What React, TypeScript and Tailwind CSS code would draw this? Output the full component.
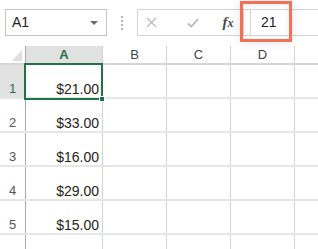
export default function App() {
  const rows = ["$21.00", "$33.00", "$16.00", "$29.00", "$15.00", ""];
  return (
    <div className="relative h-[249px] w-[318px] overflow-hidden bg-white font-['Liberation_Sans',Arial,sans-serif]">
      {/* formula bar */}
      <div className="flex h-[45px] items-start pt-[9px]">
        <div className="ml-[5px] flex h-[27px] w-[102px] shrink-0 items-center justify-between border border-[#c6c6c6] pl-[6px] pr-[8px]">
          <span className="text-[14px] text-[#222]">A1</span>
          <svg width="8" height="4" viewBox="0 0 8 4">
            <path d="M0 0h8L4 4z" fill="#6a6a6a" />
          </svg>
        </div>
        <div className="flex h-[27px] w-[30px] shrink-0 flex-col items-center justify-center gap-[2px]">
          <div className="h-[2px] w-[2px] bg-[#b5b5b5]" />
          <div className="h-[2px] w-[2px] bg-[#b5b5b5]" />
          <div className="h-[2px] w-[2px] bg-[#b5b5b5]" />
          <div className="h-[2px] w-[2px] bg-[#b5b5b5]" />
        </div>
        <div className="flex h-[27px] flex-1 items-center border-y border-l border-[#d4d4d4]">
          <div className="ml-[7px] flex w-[12px] justify-center">
            <svg width="11" height="11" viewBox="0 0 11 11">
              <path d="M1 1L10 10M10 1L1 10" stroke="#b9b9b9" strokeWidth="1.2" />
            </svg>
          </div>
          <div className="ml-[30px] flex w-[12px] justify-center">
            <svg width="12" height="10" viewBox="0 0 12 10">
              <path d="M1 5.5L4.3 8.5L11 1.2" stroke="#b9b9b9" strokeWidth="1.8" fill="none" />
            </svg>
          </div>
          <div className="ml-[21px] w-[16px] text-center font-['Liberation_Serif',serif] text-[15px] font-bold italic leading-none text-[#4a4a4a]">
            <span>f</span>
            <span className="text-[12px]">x</span>
          </div>
          <div className="ml-[7px] h-[25px] w-px bg-[#d4d4d4]" />
          <div className="ml-[6px] flex h-full flex-1 items-center border-l border-[#d4d4d4] pl-[10px] text-[14px] text-[#222]">
            21
          </div>
        </div>
      </div>

      {/* header row */}
      <div className="flex h-[20px] border-b-2 border-[#d6d6d6] pt-px text-[13px]">
        <div className="relative w-[26px] shrink-0 border-r border-[#ababab]">
          <svg className="absolute bottom-[2px] right-[3px]" width="10" height="11" viewBox="0 0 10 11">
            <path d="M10 0V11H0z" fill="#dedede" />
          </svg>
        </div>
        <div className="flex w-[77px] shrink-0 items-center justify-center border-r border-[#d4d4d4] bg-[#e1e1e1] font-bold text-[#217346]">
          A
        </div>
        <div className="flex w-[64px] shrink-0 items-center justify-center border-r border-[#d4d4d4] text-[#444]">B</div>
        <div className="flex w-[64px] shrink-0 items-center justify-center border-r border-[#d4d4d4] text-[#444]">C</div>
        <div className="flex w-[64px] shrink-0 items-center justify-center border-r border-[#d4d4d4] text-[#444]">D</div>
        <div className="flex-1" />
      </div>

      {/* rows */}
      {rows.map((v, i) => (
        <div key={i} className="flex h-[34px] border-b-2 border-[#e6e6e6]">
          <div
            className={
              i === 0
                ? "flex w-[26px] shrink-0 items-end justify-center border-r border-[#ababab] bg-[#e1e1e1] text-[13px] leading-[16px] text-[#217346]"
                : "flex w-[26px] shrink-0 items-end justify-center border-r border-[#ababab] text-[13px] leading-[16px] text-[#555]"
            }
          >
            {i < 5 ? i + 1 : ""}
          </div>
          <div className="flex w-[77px] shrink-0 items-end justify-end border-r border-[#d4d4d4] pr-[3px] text-[14px] leading-[16px] text-[#222]">
            {v}
          </div>
          <div className="w-[64px] shrink-0 border-r border-[#d4d4d4]" />
          <div className="w-[64px] shrink-0 border-r border-[#d4d4d4]" />
          <div className="w-[64px] shrink-0 border-r border-[#d4d4d4]" />
          <div className="flex-1" />
        </div>
      ))}

      {/* selected cell */}
      <div className="absolute left-[24px] top-[63px] h-[37px] w-[79px] border-2 border-[#217346]" />
      <div className="absolute left-[99px] top-[96px] h-[6px] w-[6px] border border-white bg-[#217346]" />

      {/* highlight box */}
      <div className="absolute left-[240px] top-[1px] h-[41px] w-[52px] border-[3px] border-[#f07157] shadow-[0_0_10px_rgba(0,0,0,0.12),inset_0_0_6px_rgba(0,0,0,0.08)]" />
    </div>
  );
}
